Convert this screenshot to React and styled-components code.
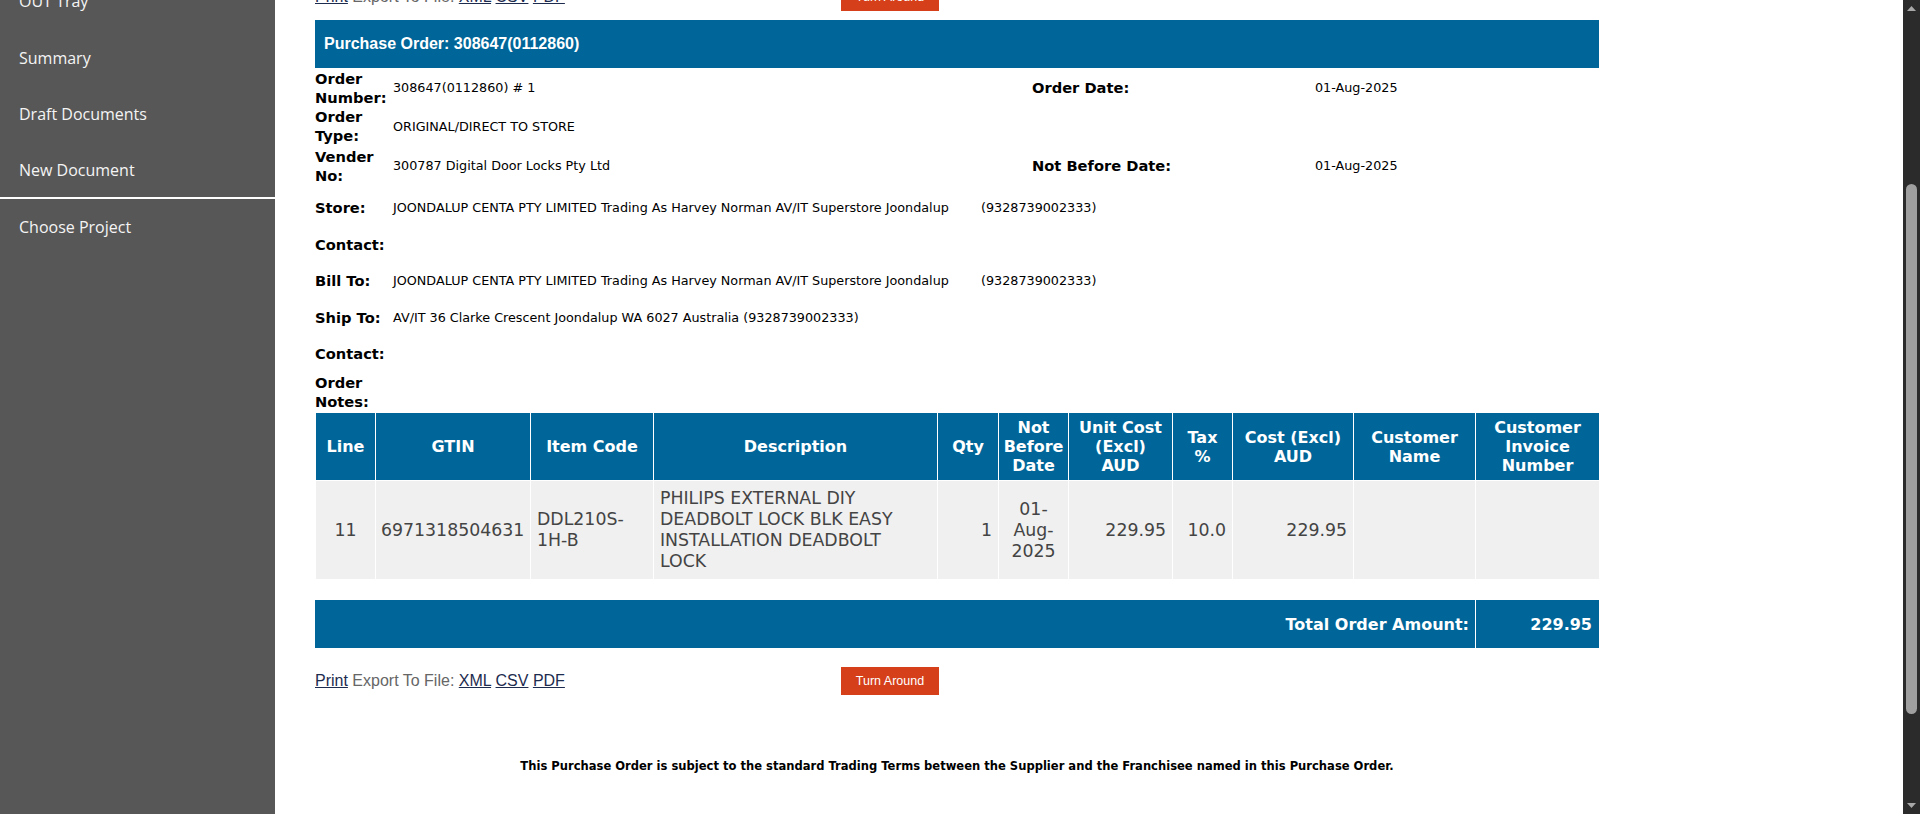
import React from 'react';
import styled, { createGlobalStyle } from 'styled-components';

const GlobalStyle = createGlobalStyle`
  html, body { margin: 0; padding: 0; background: #fff; overflow: hidden; }
  body { font-family: "DejaVu Sans", Verdana, sans-serif; }
  * { box-sizing: border-box; }
`;

const Page = styled.div`
  display: flex;
  height: 814px;
  overflow: hidden;
`;

const Sidebar = styled.nav`
  width: 275px;
  flex: none;
  background: #575757;
  overflow: hidden;
`;

const NavList = styled.ul`
  list-style: none;
  margin: -27px 0 0;
  padding: 0;
`;

const NavItem = styled.li`
  height: 56.5px;
  display: flex;
  align-items: center;
  padding-left: 19px;
  font-family: "Open Sans", "Noto Sans", sans-serif;
  font-size: 16px;
  color: #f4f4f4;
  border-bottom: ${(p) => (p.$divider ? '2px solid #ffffff' : 'none')};
`;

const Main = styled.main`
  flex: 1;
  overflow: hidden;
  padding-left: 40px;
`;

const Content = styled.div`
  width: 1284px;
  margin-top: -17px;
`;

const ActionBar = styled.div`
  display: flex;
  align-items: center;
  height: 28px;
  margin-top: ${(p) => p.$mt || 0}px;
`;

const Links = styled.div`
  width: 526px;
  flex: none;
  font-family: "Liberation Sans", Arial, sans-serif;
  font-size: 16px;
  color: #666;
`;

const LinkA = styled.a`
  color: #1d2b4f;
  text-decoration: underline;
  cursor: pointer;
`;

const TurnButton = styled.button`
  width: 98px;
  height: 28px;
  padding: 0;
  border: none;
  background: #d5401a;
  color: #fff;
  font-family: "Liberation Sans", Arial, sans-serif;
  font-size: 12.5px;
  cursor: pointer;
`;

const TitleBar = styled.div`
  margin-top: 9px;
  height: 48px;
  background: #006699;
  color: #fff;
  display: flex;
  align-items: center;
  padding-left: 9px;
  font-family: "Liberation Sans", Arial, sans-serif;
  font-weight: bold;
  font-size: 16px;
`;

const InfoRow = styled.div`
  display: flex;
  align-items: center;
  height: ${(p) => p.$h}px;
`;

const Label = styled.div`
  width: ${(p) => p.$w || 78}px;
  flex: none;
  font-weight: bold;
  font-size: 14.67px;
  line-height: 19px;
  color: #000;
`;

const Value = styled.div`
  width: ${(p) => (p.$w ? `${p.$w}px` : 'auto')};
  flex: ${(p) => (p.$w ? 'none' : '1')};
  font-size: 12.75px;
  color: #000;
  white-space: nowrap;
`;

const PartyName = styled.span`
  display: inline-block;
  width: 588px;
`;

const Table = styled.table`
  width: 1284px;
  border-collapse: collapse;
  table-layout: fixed;
`;

const Th = styled.th`
  background: #006699;
  color: #fff;
  font-size: 16px;
  font-weight: bold;
  line-height: 19px;
  padding: 5px ${(p) => (p.$px != null ? p.$px : 6)}px;
  border: 1px solid #fff;
  text-align: center;
  vertical-align: middle;
`;

const Td = styled.td`
  background: #f0f0f0;
  color: #444;
  font-size: 17.33px;
  line-height: 21px;
  padding: 7px ${(p) => (p.$px != null ? p.$px : 6)}px;
  border: 1px solid #fff;
  text-align: ${(p) => p.$align || 'left'};
  vertical-align: middle;
  white-space: ${(p) => (p.$nowrap ? 'nowrap' : 'normal')};
`;

const TotalBar = styled.div`
  display: flex;
  margin-top: 20px;
  height: 48px;
  background: #006699;
  color: #fff;
  font-weight: bold;
  font-size: 16px;
`;

const TotalLabel = styled.div`
  flex: 1;
  display: flex;
  align-items: center;
  justify-content: flex-end;
  padding-right: 6px;
`;

const TotalValue = styled.div`
  width: 124px;
  flex: none;
  border-left: 1px solid #fff;
  display: flex;
  align-items: center;
  justify-content: flex-end;
  padding-right: 7px;
`;

const Terms = styled.p`
  margin: 64px 0 0;
  text-align: center;
  font-weight: bold;
  font-size: 11.55px;
  color: #000;
`;

const ScrollTrack = styled.div`
  width: 17px;
  flex: none;
  background: #2b2b2b;
  display: flex;
  flex-direction: column;
  align-items: center;
`;

const ArrowBox = styled.div`
  height: 17px;
  width: 17px;
  display: flex;
  align-items: center;
  justify-content: center;
`;

const Thumb = styled.div`
  margin-top: 167px;
  width: 11px;
  height: 530px;
  border-radius: 6px;
  background: #9f9f9f;
`;

const Spacer = styled.div`
  flex: 1;
`;

const columns = [60, 155, 123, 284, 61, 70, 104, 60, 121, 122, 124];

const ActionRow = ({ mt }) => (
  <ActionBar $mt={mt}>
    <Links>
      <LinkA>Print</LinkA> Export To File: <LinkA>XML</LinkA> <LinkA>CSV</LinkA> <LinkA>PDF</LinkA>
    </Links>
    <TurnButton>Turn Around</TurnButton>
  </ActionBar>
);

const store = 'JOONDALUP CENTA PTY LIMITED Trading As Harvey Norman AV/IT Superstore Joondalup';

export default function App() {
  return (
    <>
      <GlobalStyle />
      <Page>
        <Sidebar>
          <NavList>
            <NavItem>OUT Tray</NavItem>
            <NavItem>Summary</NavItem>
            <NavItem>Draft Documents</NavItem>
            <NavItem $divider>New Document</NavItem>
            <NavItem>Choose Project</NavItem>
          </NavList>
        </Sidebar>
        <Main>
          <Content>
            <ActionRow />
            <TitleBar>Purchase Order: 308647(0112860)</TitleBar>

            <InfoRow $h={39}>
              <Label>Order Number:</Label>
              <Value $w={639}>308647(0112860) # 1</Value>
              <Label $w={283}>Order Date:</Label>
              <Value>01-Aug-2025</Value>
            </InfoRow>
            <InfoRow $h={38}>
              <Label>Order Type:</Label>
              <Value>ORIGINAL/DIRECT TO STORE</Value>
            </InfoRow>
            <InfoRow $h={41}>
              <Label>Vender No:</Label>
              <Value $w={639}>300787 Digital Door Locks Pty Ltd</Value>
              <Label $w={283}>Not Before Date:</Label>
              <Value>01-Aug-2025</Value>
            </InfoRow>
            <InfoRow $h={42}>
              <Label>Store:</Label>
              <Value>
                <PartyName>{store}</PartyName>(9328739002333)
              </Value>
            </InfoRow>
            <InfoRow $h={33}>
              <Label>Contact:</Label>
              <Value />
            </InfoRow>
            <InfoRow $h={38}>
              <Label>Bill To:</Label>
              <Value>
                <PartyName>{store}</PartyName>(9328739002333)
              </Value>
            </InfoRow>
            <InfoRow $h={36}>
              <Label>Ship To:</Label>
              <Value>AV/IT 36 Clarke Crescent Joondalup WA 6027 Australia (9328739002333)</Value>
            </InfoRow>
            <InfoRow $h={36}>
              <Label>Contact:</Label>
              <Value />
            </InfoRow>
            <InfoRow $h={41}>
              <Label>Order Notes:</Label>
              <Value />
            </InfoRow>

            <Table>
              <colgroup>
                {columns.map((w, i) => (
                  <col key={i} style={{ width: w }} />
                ))}
              </colgroup>
              <thead>
                <tr>
                  <Th>Line</Th>
                  <Th>GTIN</Th>
                  <Th>Item Code</Th>
                  <Th>Description</Th>
                  <Th>Qty</Th>
                  <Th $px={3}>Not Before Date</Th>
                  <Th $px={7}>Unit Cost (Excl) AUD</Th>
                  <Th>Tax %</Th>
                  <Th>Cost (Excl) AUD</Th>
                  <Th>Customer Name</Th>
                  <Th>Customer Invoice Number</Th>
                </tr>
              </thead>
              <tbody>
                <tr>
                  <Td $align="center">11</Td>
                  <Td $nowrap $px={5}>6971318504631</Td>
                  <Td>DDL210S-1H-B</Td>
                  <Td>PHILIPS EXTERNAL DIY DEADBOLT LOCK BLK EASY INSTALLATION DEADBOLT LOCK</Td>
                  <Td $align="right">1</Td>
                  <Td $align="center">01-Aug-2025</Td>
                  <Td $align="right">229.95</Td>
                  <Td $align="right">10.0</Td>
                  <Td $align="right">229.95</Td>
                  <Td></Td>
                  <Td></Td>
                </tr>
              </tbody>
            </Table>

            <TotalBar>
              <TotalLabel>Total Order Amount:</TotalLabel>
              <TotalValue>229.95</TotalValue>
            </TotalBar>

            <ActionRow mt={19} />

            <Terms>
              This Purchase Order is subject to the standard Trading Terms between the Supplier and the Franchisee named in this Purchase Order.
            </Terms>
          </Content>
        </Main>
        <ScrollTrack>
          <ArrowBox>
            <svg width="9" height="5" viewBox="0 0 9 5">
              <path d="M0 5 L4.5 0 L9 5 Z" fill="#a8a8a8" />
            </svg>
          </ArrowBox>
          <Thumb />
          <Spacer />
          <ArrowBox>
            <svg width="9" height="5" viewBox="0 0 9 5">
              <path d="M0 0 L4.5 5 L9 0 Z" fill="#a8a8a8" />
            </svg>
          </ArrowBox>
        </ScrollTrack>
      </Page>
    </>
  );
}
